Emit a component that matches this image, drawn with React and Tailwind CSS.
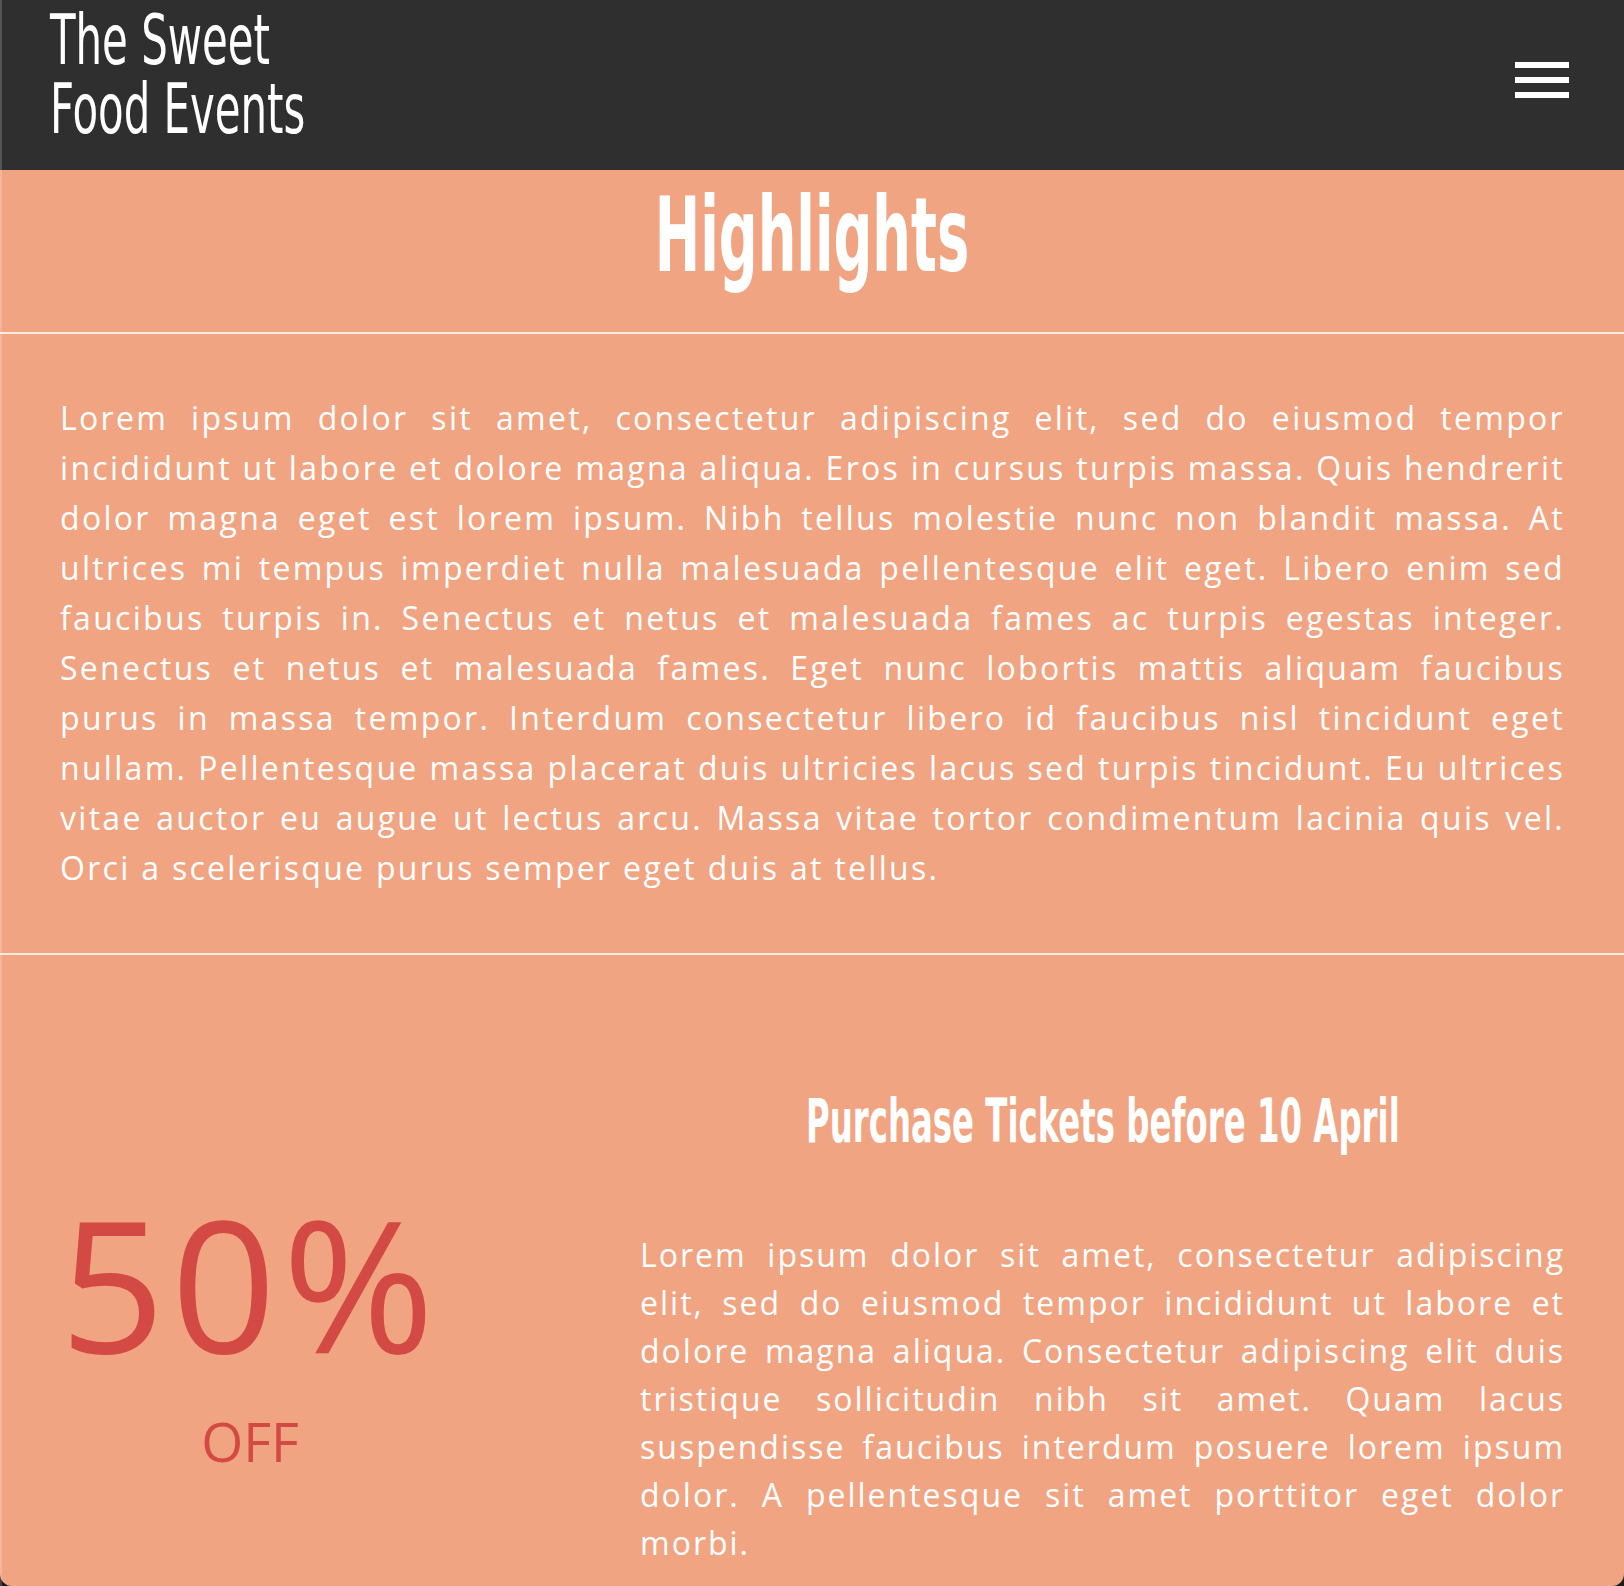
import React from "react";

const narrow = "font-['Liberation_Sans_Narrow','DejaVu_Sans_Condensed',sans-serif]";
const body = "font-['Open_Sans','Noto_Sans',sans-serif]";

const intro =
  "Lorem ipsum dolor sit amet, consectetur adipiscing elit, sed do eiusmod tempor incididunt ut labore et dolore magna aliqua. Eros in cursus turpis massa. Quis hendrerit dolor magna eget est lorem ipsum. Nibh tellus molestie nunc non blandit massa. At ultrices mi tempus imperdiet nulla malesuada pellentesque elit eget. Libero enim sed faucibus turpis in. Senectus et netus et malesuada fames ac turpis egestas integer. Senectus et netus et malesuada fames. Eget nunc lobortis mattis aliquam faucibus purus in massa tempor. Interdum consectetur libero id faucibus nisl tincidunt eget nullam. Pellentesque massa placerat duis ultricies lacus sed turpis tincidunt. Eu ultrices vitae auctor eu augue ut lectus arcu. Massa vitae tortor condimentum lacinia quis vel. Orci a scelerisque purus semper eget duis at tellus.";

const offer =
  "Lorem ipsum dolor sit amet, consectetur adipiscing elit, sed do eiusmod tempor incididunt ut labore et dolore magna aliqua. Consectetur adipiscing elit duis tristique sollicitudin nibh sit amet. Quam lacus suspendisse faucibus interdum posuere lorem ipsum dolor. A pellentesque sit amet porttitor eget dolor morbi.";

export default function App() {
  return (
    <div className="relative h-[1586px] overflow-hidden bg-[#1a1a1a]">
      <div className="h-full overflow-hidden rounded-b-[12px] bg-[#f1a482] text-white">
        <header className="flex h-[170px] items-start justify-between bg-[#2f2f2f] pl-[50px] pr-[55px] pt-[6px]">
          <h1 className={`${narrow} origin-left scale-x-[0.665] whitespace-nowrap text-[70px] leading-[69px]`}>
            The Sweet
            <br />
            Food Events
          </h1>
          <button className="mt-[56px] flex w-[54px] shrink-0 flex-col gap-[9px]">
            <span className="h-[6px] w-full bg-white" />
            <span className="h-[6px] w-full bg-white" />
            <span className="h-[6px] w-full bg-white" />
          </button>
        </header>

        <section className="flex justify-center border-b-2 border-[#fdebe3] pb-[45px] pt-[13px]">
          <h2 className={`${narrow} shrink-0 scale-x-[0.58] text-[104px] font-bold leading-none`}>
            Highlights
          </h2>
        </section>

        <section className="border-b-2 border-[#fdebe3] pb-[60px] pl-[60px] pr-[59px] pt-[59px]">
          <p className={`${body} text-justify text-[32px] leading-[50px] tracking-[2.3px]`}>{intro}</p>
        </section>

        <section className="flex items-start pl-[60px] pr-[59px] pt-[136px]">
          <div className="mt-[99px] flex w-[380px] shrink-0 flex-col items-center text-[#d24a43]">
            <div className={`${body} text-[184px] leading-none tracking-[6px]`}>50%</div>
            <div className={`${body} mt-[40px] text-[54px] leading-none`}>OFF</div>
          </div>
          <div className="ml-[200px] min-w-0 flex-1">
            <div className="flex justify-center">
              <h3 className={`${narrow} shrink-0 scale-x-[0.6] whitespace-nowrap text-[60px] font-bold leading-none`}>
                Purchase Tickets before 10 April
              </h3>
            </div>
            <p className={`${body} mt-[80px] text-justify text-[32px] leading-[48px] tracking-[2px]`}>{offer}</p>
          </div>
        </section>
      </div>
      <div className="pointer-events-none absolute inset-0 shadow-[inset_2px_0_0_rgba(255,255,255,0.18)]" />
    </div>
  );
}
